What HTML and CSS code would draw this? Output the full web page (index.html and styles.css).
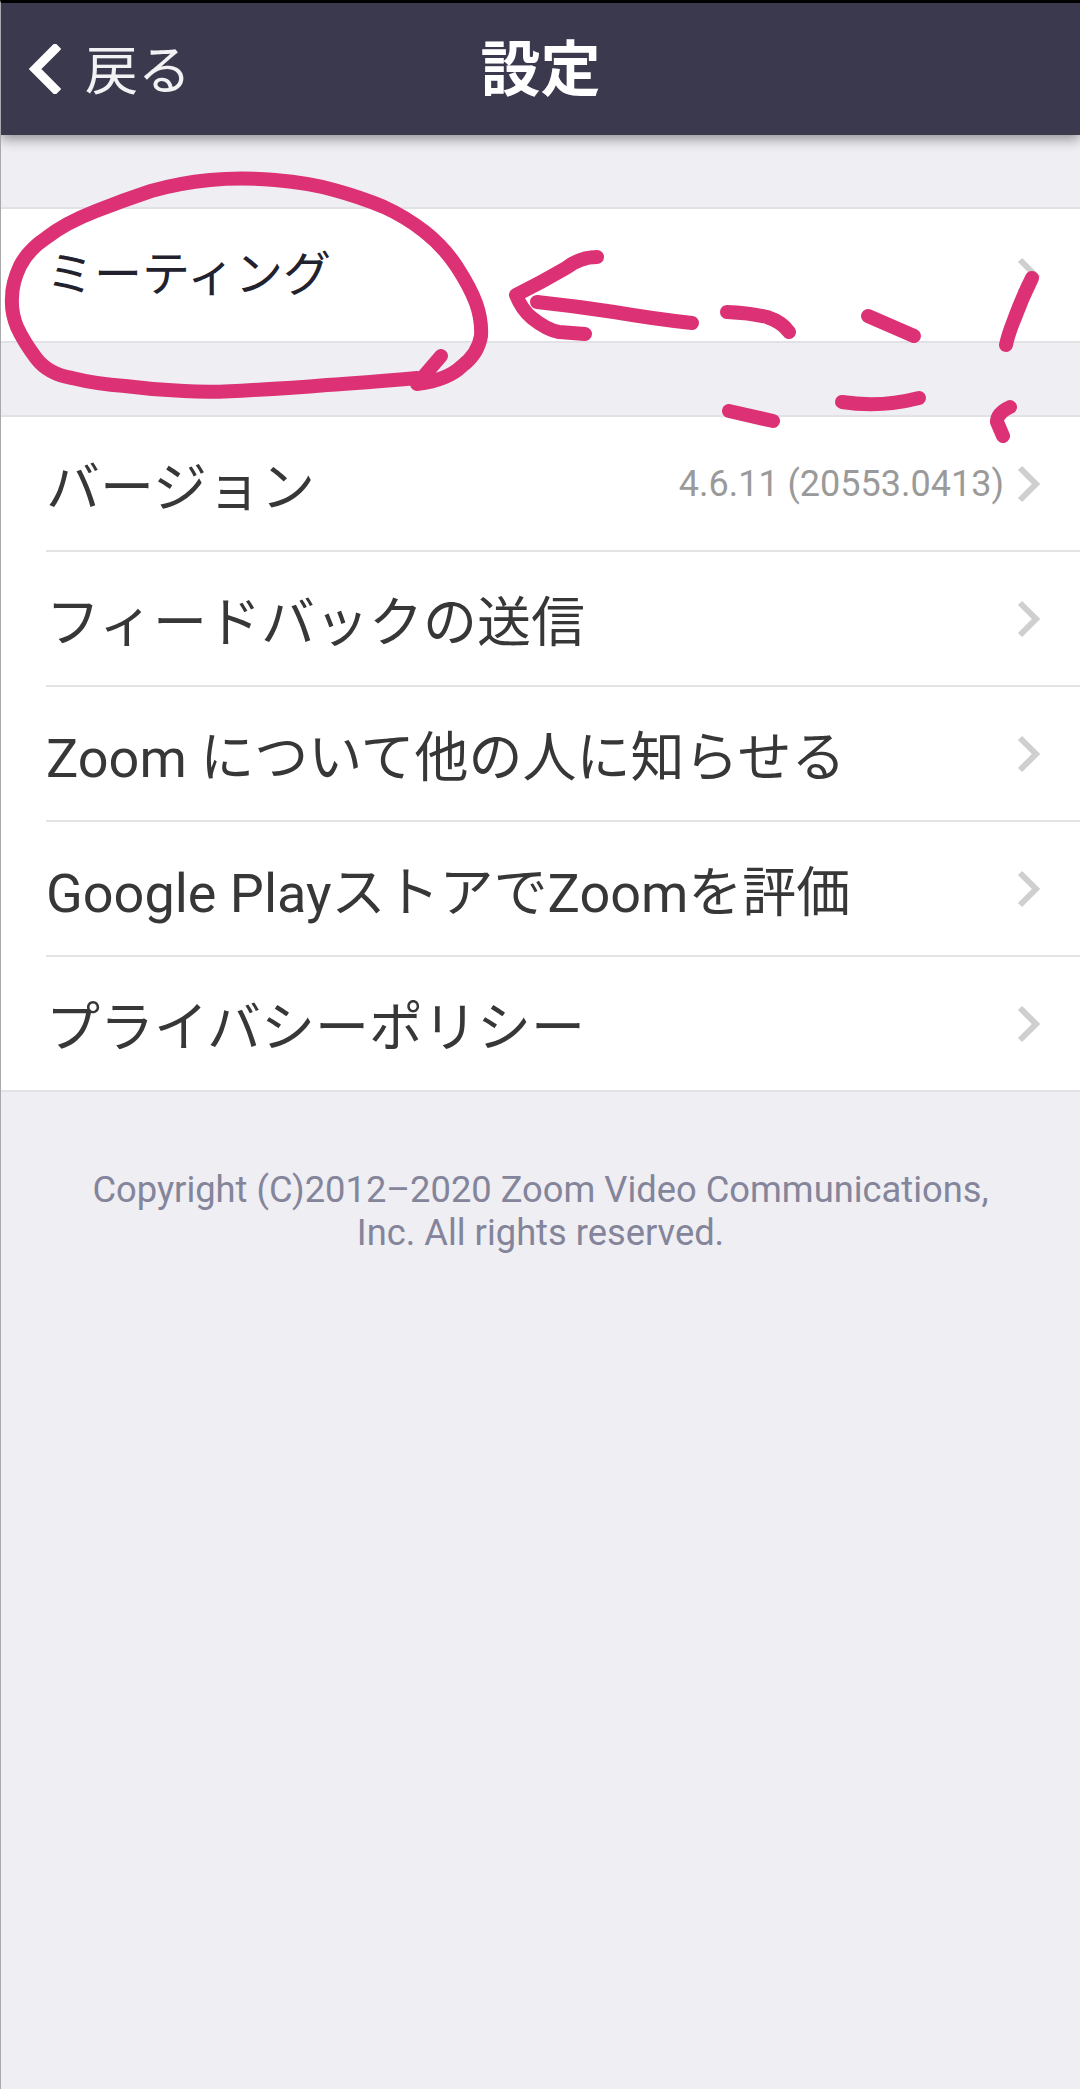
FILE: index.html
```html
<!DOCTYPE html>
<html lang="ja">
<head>
<meta charset="utf-8">
<title>設定</title>
<link rel="stylesheet" href="styles.css">
</head>
<body>
<div class="screen">
  <header class="topbar">
    <div class="back">
      <svg class="back-icon" viewBox="0 0 32 50" aria-hidden="true"><path d="M26 5 6 25l20 20"/></svg>
      <span>戻る</span>
    </div>
    <h1 class="title">設定</h1>
  </header>
  <main class="content">
    <section class="group">
      <div class="row row-meeting">
        <span class="label label-meeting">ミーティング</span>
        <svg class="chev" viewBox="0 0 24 38" aria-hidden="true"><path d="M4 3 20 19 4 35"/></svg>
      </div>
    </section>
    <section class="group">
      <div class="row">
        <span class="label">バージョン</span>
        <span class="value">4.6.11 (20553.0413)</span>
        <svg class="chev" viewBox="0 0 24 38" aria-hidden="true"><path d="M4 3 20 19 4 35"/></svg>
      </div>
      <div class="row">
        <span class="label">フィードバックの送信</span>
        <svg class="chev" viewBox="0 0 24 38" aria-hidden="true"><path d="M4 3 20 19 4 35"/></svg>
      </div>
      <div class="row">
        <span class="label">Zoom について他の人に知らせる</span>
        <svg class="chev" viewBox="0 0 24 38" aria-hidden="true"><path d="M4 3 20 19 4 35"/></svg>
      </div>
      <div class="row">
        <span class="label">Google PlayストアでZoomを評価</span>
        <svg class="chev" viewBox="0 0 24 38" aria-hidden="true"><path d="M4 3 20 19 4 35"/></svg>
      </div>
      <div class="row">
        <span class="label">プライバシーポリシー</span>
        <svg class="chev" viewBox="0 0 24 38" aria-hidden="true"><path d="M4 3 20 19 4 35"/></svg>
      </div>
    </section>
    <p class="copyright">Copyright (C)2012–2020 Zoom Video Communications,<br>Inc. All rights reserved.</p>
  </main>
  <svg class="scribble" viewBox="0 0 1080 2089" aria-hidden="true">
    <path d="M441 356 417 384Q448 380 462 366Q478 354 481 336Q482 320 476 303Q470 287 457 267Q444 247 425 232Q406 217 384 207Q360 197 334 190Q310 183 275 180Q241 177 210 180Q179 183 151 191Q124 200 96 211Q65 223 46 238Q28 250 20 266Q12 283 12 298Q11 312 17 327Q24 342 36 358Q48 374 72 378Q96 384 125 386Q155 390 184 391Q213 393 253 390Q293 388 327 385Q362 383 417 378"/>
    <path d="M597 257Q580 257 566 268Q542 282 516 295Q522 310 532 318Q547 330 559 332L585 334"/>
    <path d="M537 302Q575 306 614 312Q655 319 692 323"/>
    <path d="M727 312Q750 313 767 317Q782 322 789 332"/>
    <path d="M868 316 914 336"/>
    <path d="M1032 278Q1022 298 1014 320Q1008 335 1006 345"/>
    <path d="M729 411 773 421"/>
    <path d="M842 402Q880 408 919 398"/>
    <path d="M1010 407Q997 413 997 422L1003 436"/>
  </svg>
</div>
</body>
</html>
```
FILE: styles.css
```css
* { box-sizing: border-box; }
html, body { margin: 0; padding: 0; }
body {
  font-family: Roboto, "Noto Sans CJK JP", sans-serif;
  background: #eeeef3;
}
.screen {
  position: relative;
  width: 1080px;
  height: 2089px;
  overflow: hidden;
  background: #eeeef3;
  border-top: 3px solid #000;
  border-left: 1px solid #a9a9ad;
}
.topbar {
  position: relative;
  height: 132px;
  display: flex;
  align-items: center;
  justify-content: center;
  background: #3b394e;
  color: #fff;
  box-shadow: 0 4px 12px rgba(0, 0, 0, .4);
}
.back {
  position: absolute;
  left: 28px;
  top: 0;
  bottom: 4px;
  display: flex;
  align-items: center;
  gap: 24px;
  font-size: 53px;
  color: #f2f2f4;
}
.back-icon { width: 32px; height: 50px; margin-top: 4px; }
.back-icon path { fill: none; stroke: #fff; stroke-width: 9; stroke-linecap: square; }
.title { margin: 0; padding-top: 3px; font-size: 60px; font-weight: 700; line-height: 1; }
.content { padding-top: 72px; }
.group {
  margin-bottom: 72px;
  background: #fff;
  border-top: 2px solid #e2e2e6;
  border-bottom: 2px solid #e2e2e6;
}
.row {
  display: flex;
  align-items: center;
  height: 133px;
  margin-left: 45px;
  padding-right: 40px;
  color: #373737;
}
.row + .row { height: 135px; border-top: 2px solid #e4e4e6; }
.label { flex: 1; font-size: 54px; white-space: nowrap; }
.row-meeting { align-items: flex-start; height: 132px; }
.label-meeting {
  font-size: 48px;
  color: #22222e;
  line-height: 60px;
  padding-top: 36px;
}
.value { font-size: 36px; color: #9a9a9a; margin-right: 12px; }
.chev { width: 24px; height: 38px; flex: none; }
.row-meeting .chev { margin-top: 48px; }
.chev path { fill: none; stroke: #cfcfcf; stroke-width: 6; }
.copyright {
  margin: 0;
  padding-top: 4px;
  text-align: center;
  font-size: 36.3px;
  line-height: 43px;
  color: #84849a;
}
.scribble {
  position: absolute;
  left: -1px;
  top: -3px;
  width: 1080px;
  height: 2089px;
  pointer-events: none;
}
.scribble path {
  fill: none;
  stroke: #dc3174;
  stroke-width: 14;
  stroke-linecap: round;
  stroke-linejoin: round;
}
```
